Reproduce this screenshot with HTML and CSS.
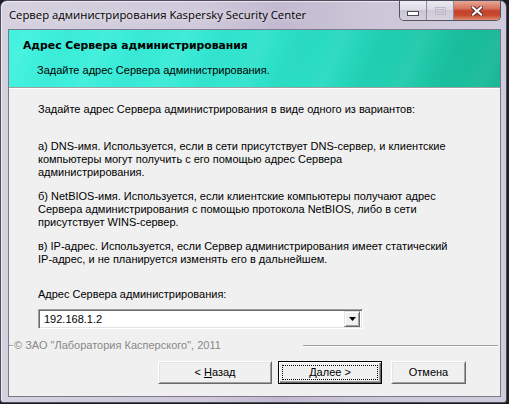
FILE: index.html
```html
<!DOCTYPE html>
<html lang="ru">
<head>
<meta charset="utf-8">
<title>Сервер администрирования Kaspersky Security Center</title>
<link rel="stylesheet" href="styles.css">
</head>
<body>
<div class="window">
  <div class="titlebar">
    <span class="title">Сервер администрирования Kaspersky Security Center</span>
    <div class="caption">
      <span class="cap cap-min"><svg width="12" height="5" viewBox="0 0 12 5"><rect x="0.5" y="0.5" width="11" height="4" fill="#fff" stroke="#4a4a55"/></svg></span>
      <span class="cap cap-max"><svg width="11" height="8" viewBox="0 0 11 8"><rect x="0.5" y="0.5" width="10" height="7" fill="none" stroke="#bdb9c8"/><rect x="2.5" y="2.5" width="6" height="3" fill="none" stroke="#bdb9c8"/></svg></span>
      <span class="cap cap-close"><svg width="12" height="10" viewBox="0 0 12 10"><path d="M2 1.5 L10 8.5 M10 1.5 L2 8.5" stroke="#5b2a22" stroke-width="4" stroke-linecap="square"/><path d="M2 1.5 L10 8.5 M10 1.5 L2 8.5" stroke="#fff" stroke-width="2.2" stroke-linecap="square"/></svg></span>
    </div>
  </div>
  <div class="client">
    <div class="header">
      <div class="h-title">Адрес Сервера администрирования</div>
      <div class="h-sub">Задайте адрес Сервера администрирования.</div>
    </div>
    <div class="content">
      <p class="intro">Задайте адрес Сервера администрирования в виде одного из вариантов:</p>
      <p class="para">а) DNS-имя. Используется, если в сети присутствует DNS-сервер, и клиентские<br>компьютеры могут получить с его помощью адрес Сервера<br>администрирования.</p>
      <p class="para">б) NetBIOS-имя. Используется, если клиентские компьютеры получают адрес<br>Сервера администрирования с помощью протокола NetBIOS, либо в сети<br>присутствует WINS-сервер.</p>
      <p class="para">в) IP-адрес. Используется, если Сервер администрирования имеет статический<br>IP-адрес, и не планируется изменять его в дальнейшем.</p>
      <p class="label">Адрес Сервера администрирования:</p>
      <div class="combo">
        <span class="combo-text">192.168.1.2</span>
        <span class="combo-btn"><svg width="7" height="4" viewBox="0 0 7 4"><path d="M0 0 H7 L3.5 4 Z" fill="#000"/></svg></span>
      </div>
    </div>
    <div class="footer">
      <div class="sep">
        <span class="line line-l"></span>
        <span class="copy">© ЗАО "Лаборатория Касперского", 2011</span>
        <span class="line line-r"></span>
      </div>
      <div class="buttons">
        <span class="btn btn-back"><span class="btn-label">&lt; <u>Н</u>азад</span></span>
        <span class="btn btn-next"><span class="focus"><span class="btn-label"><u>Д</u>алее &gt;</span></span></span>
        <span class="btn btn-cancel"><span class="btn-label">Отмена</span></span>
      </div>
    </div>
  </div>
</div>
</body>
</html>
```
FILE: styles.css
```css
html, body {
  margin: 0;
  padding: 0;
}
body {
  width: 509px;
  height: 404px;
  overflow: hidden;
  background: #1c1c22;
}
.window {
  box-sizing: border-box;
  width: 507px;
  height: 403px;
  border: 1px solid #4e4b5c;
  border-radius: 7px 7px 3px 3px;
  padding: 0 5px 5px 7px;
  display: flex;
  flex-direction: column;
  background: linear-gradient(90deg, #d5d1df 0%, #cfc9db 40%, #c2b9d0 55%, #cdc8d9 75%, #d1ccdc 100%);
  box-shadow: inset 1px 1px 0 rgba(255,255,255,0.6);
}
.titlebar {
  height: 28px;
  display: flex;
  justify-content: space-between;
  align-items: flex-start;
  flex-shrink: 0;
}
.title {
  font-family: "Open Sans", "Liberation Sans", sans-serif;
  font-size: 11.3px;
  line-height: 28px;
  color: #000;
  padding-left: 1px;
  text-shadow: 0 0 6px rgba(255,255,255,0.8);
}
.caption {
  display: flex;
  height: 19px;
  border: 1px solid #55525f;
  border-top: none;
  border-radius: 0 0 5px 5px;
  overflow: hidden;
}
.cap {
  display: flex;
  align-items: center;
  justify-content: center;
  height: 19px;
}
.cap-min, .cap-max {
  width: 26px;
  border-right: 1px solid #8f8b9c;
  background: linear-gradient(180deg, #f0eef4 0%, #dedbe6 45%, #c9c5d4 50%, #d3cfdc 100%);
}
.cap-min svg { margin-top: 5px; }
.cap-max {
  background: linear-gradient(180deg, #ebe9f0 0%, #dcd9e4 45%, #cecad8 50%, #d6d2de 100%);
}
.cap-close {
  width: 46px;
  background: linear-gradient(180deg, #e7a896 0%, #d7705c 40%, #c4412b 52%, #c8492f 75%, #dc8a6e 100%);
}
.client {
  box-sizing: border-box;
  width: 493px;
  height: 368px;
  border: 1px solid #7c7889;
  background: #f0f0f0;
  display: flex;
  flex-direction: column;
  font-family: "Liberation Sans", Arial, sans-serif;
  font-size: 11px;
  color: #000;
}
.header {
  height: 58px;
  flex-shrink: 0;
  box-sizing: border-box;
  padding: 8px 0 0 14px;
  border-bottom: 1px solid #a0a0a0;
  box-shadow: 0 1px 0 #ffffff;
  background:
    repeating-linear-gradient(115deg, rgba(255,255,255,0) 0px, rgba(255,255,255,0.05) 18px, rgba(255,255,255,0) 36px, rgba(0,0,0,0.02) 54px, rgba(255,255,255,0) 72px),
    linear-gradient(100deg, #40f2de 0%, #38ead6 35%, #27dac0 65%, #1bc3a2 88%, #17b694 100%);
}
.h-title {
  font-family: "DejaVu Sans", Verdana, sans-serif;
  font-weight: bold;
  font-size: 10.8px;
  line-height: 15px;
  color: #000;
}
.h-sub {
  margin-top: 11px;
  padding-left: 14px;
  line-height: 13px;
}
.content {
  flex: 1;
  padding: 15px 0 0 29px;
}
.content p {
  margin: 0;
  line-height: 13px;
  white-space: nowrap;
}
.content .para {
  margin-top: 11px;
}
.content .intro + .para {
  margin-top: 24px;
}
.content .label {
  margin-top: 22px;
}
.combo {
  box-sizing: border-box;
  margin-top: 8px;
  width: 325px;
  height: 20px;
  background: #fff;
  border-style: solid;
  border-width: 1px;
  border-color: #a0a0a0 #ffffff #ffffff #a0a0a0;
  box-shadow: inset 1px 1px 0 #696969, inset -1px -1px 0 #e3e3e3;
  display: flex;
  align-items: center;
  justify-content: space-between;
  padding: 0 2px 0 5px;
}
.combo-text {
  line-height: 13px;
}
.combo-btn {
  box-sizing: border-box;
  width: 16px;
  height: 16px;
  background: #f0f0f0;
  border-style: solid;
  border-width: 1px;
  border-color: #e3e3e3 #696969 #696969 #e3e3e3;
  box-shadow: inset 1px 1px 0 #fff, inset -1px -1px 0 #a0a0a0;
  display: flex;
  align-items: center;
  justify-content: center;
}
.footer {
  flex-shrink: 0;
  padding-bottom: 12px;
}
.sep {
  display: flex;
  align-items: center;
  height: 13px;
  padding-right: 2px;
  margin-top: -2px;
}
.line {
  height: 0;
  border-top: 1px solid #a0a0a0;
  border-bottom: 1px solid #ffffff;
}
.line-l {
  width: 4px;
}
.line-r {
  flex: 1;
}
.copy {
  width: 289px;
  padding-left: 1px;
  color: #888888;
  line-height: 13px;
  white-space: nowrap;
}
.buttons {
  display: flex;
  margin-top: 9px;
  padding-left: 149px;
}
.btn {
  box-sizing: border-box;
  height: 23px;
  display: flex;
  align-items: center;
  justify-content: center;
  background: #f0f0f0;
  border-style: solid;
  border-width: 1px;
  border-color: #ffffff #696969 #696969 #ffffff;
  box-shadow: inset 1px 1px 0 #e3e3e3, inset -1px -1px 0 #a0a0a0;
  line-height: 13px;
}
.btn-label {
  white-space: pre;
}
.btn u { text-decoration: underline; }
.btn-back { width: 114px; }
.btn-next {
  width: 104px;
  margin-left: 6px;
  border: 1px solid #000;
  box-shadow: inset 1px 1px 0 #fff, inset -1px -1px 0 #696969, inset -2px -2px 0 #a0a0a0;
  padding: 3px;
}
.focus {
  flex: 1;
  align-self: stretch;
  display: flex;
  align-items: center;
  justify-content: center;
  border: 1px dotted #000;
}
.btn-cancel {
  width: 75px;
  margin-left: 9px;
}
```
